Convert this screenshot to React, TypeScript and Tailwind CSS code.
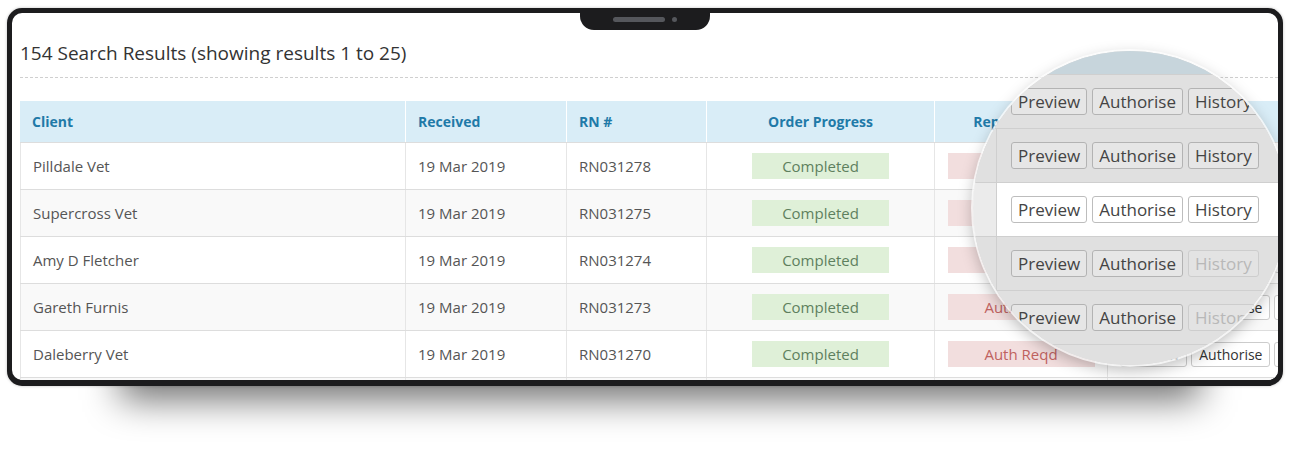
import React from 'react';

type Row = { client: string; rn: string; blank?: boolean };

const rows: Row[] = [
  { client: 'Pilldale Vet', rn: 'RN031278' },
  { client: 'Supercross Vet', rn: 'RN031275' },
  { client: 'Amy D Fletcher', rn: 'RN031274' },
  { client: 'Gareth Furnis', rn: 'RN031273' },
  { client: 'Daleberry Vet', rn: 'RN031270' },
  { client: '', rn: '', blank: true }
];

const SmallBtn = ({ label }: { label: string }) => (
  <span className="h-[25px] px-[7px] flex items-center text-[14px] text-[#333] bg-white border border-[#cccccc] rounded-[3px] whitespace-nowrap">
    {label}
  </span>
);

type LensTone = 'grey' | 'white' | 'off';

const LensBtn = ({ label, tone }: { label: string; tone: LensTone }) => {
  const cls =
    tone === 'white'
      ? 'bg-white border-[#bdbdbd] text-[#444]'
      : tone === 'off'
        ? 'bg-[#e3e3e3] border-[#cdcdcd] text-[#b8b8b8]'
        : 'bg-[#e6e6e6] border-[#b3b3b3] text-[#444]';
  return (
    <span className={`h-[27px] px-[6px] flex items-center text-[17px] border rounded-[3px] whitespace-nowrap ${cls}`}>
      {label}
    </span>
  );
};

const lensRows: { bg: string; left: string; history: LensTone; buttons: LensTone }[] = [
  { bg: 'bg-[#e0e0e0]', left: 'bg-[#e0e0e0]', history: 'grey', buttons: 'grey' },
  { bg: 'bg-[#e0e0e0]', left: 'bg-[#e0e0e0]', history: 'grey', buttons: 'grey' },
  { bg: 'bg-white', left: 'bg-[#ebebeb]', history: 'white', buttons: 'white' },
  { bg: 'bg-[#e0e0e0]', left: 'bg-[#e0e0e0]', history: 'off', buttons: 'grey' },
  { bg: 'bg-[#e0e0e0]', left: 'bg-[#e0e0e0]', history: 'off', buttons: 'grey' }
];

const Magnifier = () => (
  <div className="absolute left-[961px] top-[38px] w-[314px] h-[314px] rounded-full overflow-hidden bg-[#e0e0e0] shadow-[0_0_0_2px_rgba(255,255,255,0.75),0_5px_16px_rgba(0,0,0,0.28),inset_0_0_14px_rgba(0,0,0,0.08)]">
    <div className="h-[23px] bg-[#c7d5dc]" />
    {lensRows.map((r, i) => (
      <div key={i} className={`h-[54px] flex border-t border-[#cfcfcf] ${r.bg}`}>
        <div className={`w-[24px] shrink-0 ${i === 0 ? '' : 'border-r border-[#cfcfcf]'} ${r.left}`} />
        <div className="flex items-center gap-[5px] pl-[14px]">
          <LensBtn label="Preview" tone={r.buttons} />
          <LensBtn label="Authorise" tone={r.buttons} />
          <LensBtn label="History" tone={r.history} />
        </div>
      </div>
    ))}
    <div className="h-[40px] flex border-t border-[#cfcfcf] bg-[#e0e0e0]">
      <div className="w-[24px] shrink-0 border-r border-[#cfcfcf]" />
    </div>
  </div>
);

export default function App() {
  return (
    <div className="relative w-[1292px] h-[456px] bg-white overflow-hidden font-['Open_Sans',sans-serif] pt-[8px] pl-[7px]">
      {/* soft drop shadow under the device */}
      <div className="absolute left-[120px] top-[345px] w-[1080px] h-[55px] bg-black/55 blur-[18px]" />

      <div className="relative w-[1276px] h-[378px] rounded-[15px] bg-[#1c1c1e] border-[#1c1c1e] border-x-[5px] border-t-[5px] border-b-[6px] shadow-[0_0_3px_rgba(0,0,0,0.25)]">
        <div className="relative w-full h-full rounded-[10px] bg-white overflow-hidden">
          <div className="pl-[8px] pt-[27px]">
            <h1 className="text-[19px] leading-[26px] text-[#333] whitespace-nowrap">
              154 Search Results (showing results 1 to 25)
            </h1>
            <div className="mt-[11px] border-t border-dashed border-[#cfcfcf]" />

            <div className="mt-[23px] w-[1350px]">
              <div className="flex h-[41px] bg-[#d9edf7] text-[14px] font-bold text-[#1f7aa8]">
                <div className="w-[385px] shrink-0 px-3 flex items-center">Client</div>
                <div className="w-[161px] shrink-0 px-3 flex items-center border-l border-white">Received</div>
                <div className="w-[140px] shrink-0 px-3 flex items-center border-l border-white">RN #</div>
                <div className="w-[228px] shrink-0 px-3 flex items-center justify-center border-l border-white">Order Progress</div>
                <div className="w-[173px] shrink-0 px-3 flex items-center justify-center border-l border-white whitespace-nowrap">Report Status</div>
                <div className="w-[260px] shrink-0 px-3 flex items-center border-l border-white">Actions</div>
              </div>

              {rows.map((r, i) => (
                <div
                  key={i}
                  className={`flex h-[47px] border-t border-[#dddddd] text-[15px] text-[#555] ${i % 2 === 1 ? 'bg-[#f9f9f9]' : 'bg-white'}`}
                >
                  <div className="w-[385px] shrink-0 px-3 flex items-center border-l border-[#e6e6e6]">{r.client}</div>
                  <div className="w-[161px] shrink-0 px-3 flex items-center border-l border-[#e6e6e6]">{r.blank ? '' : '19 Mar 2019'}</div>
                  <div className="w-[140px] shrink-0 px-3 flex items-center border-l border-[#e6e6e6]">{r.rn}</div>
                  <div className="w-[228px] shrink-0 flex items-center justify-center border-l border-[#e6e6e6]">
                    {!r.blank && (
                      <span className="w-[137px] h-[26px] flex items-center justify-center bg-[#dff0d8] text-[#5e805e]">Completed</span>
                    )}
                  </div>
                  <div className="w-[173px] shrink-0 flex items-center justify-center border-l border-[#e6e6e6]">
                    {!r.blank && (
                      <span className="w-[147px] h-[26px] flex items-center justify-center bg-[#f2dede] text-[#c0625f]">Auth Reqd</span>
                    )}
                  </div>
                  <div className="w-[260px] shrink-0 pl-3 flex items-center gap-1 border-l border-[#e6e6e6]">
                    {!r.blank && (
                      <>
                        <SmallBtn label="Preview" />
                        <SmallBtn label="Authorise" />
                        <SmallBtn label="History" />
                      </>
                    )}
                  </div>
                </div>
              ))}
            </div>
          </div>

          <Magnifier />
        </div>
      </div>

      {/* camera notch */}
      <div className="absolute left-[580px] top-[8px] w-[130px] h-[22px] rounded-b-[14px] bg-[#1c1c1e] flex items-center justify-center gap-[7px]">
        <span className="w-[52px] h-[5px] rounded-full bg-[#55575c]" />
        <span className="w-[5px] h-[5px] rounded-full bg-[#55575c]" />
      </div>
    </div>
  );
}
